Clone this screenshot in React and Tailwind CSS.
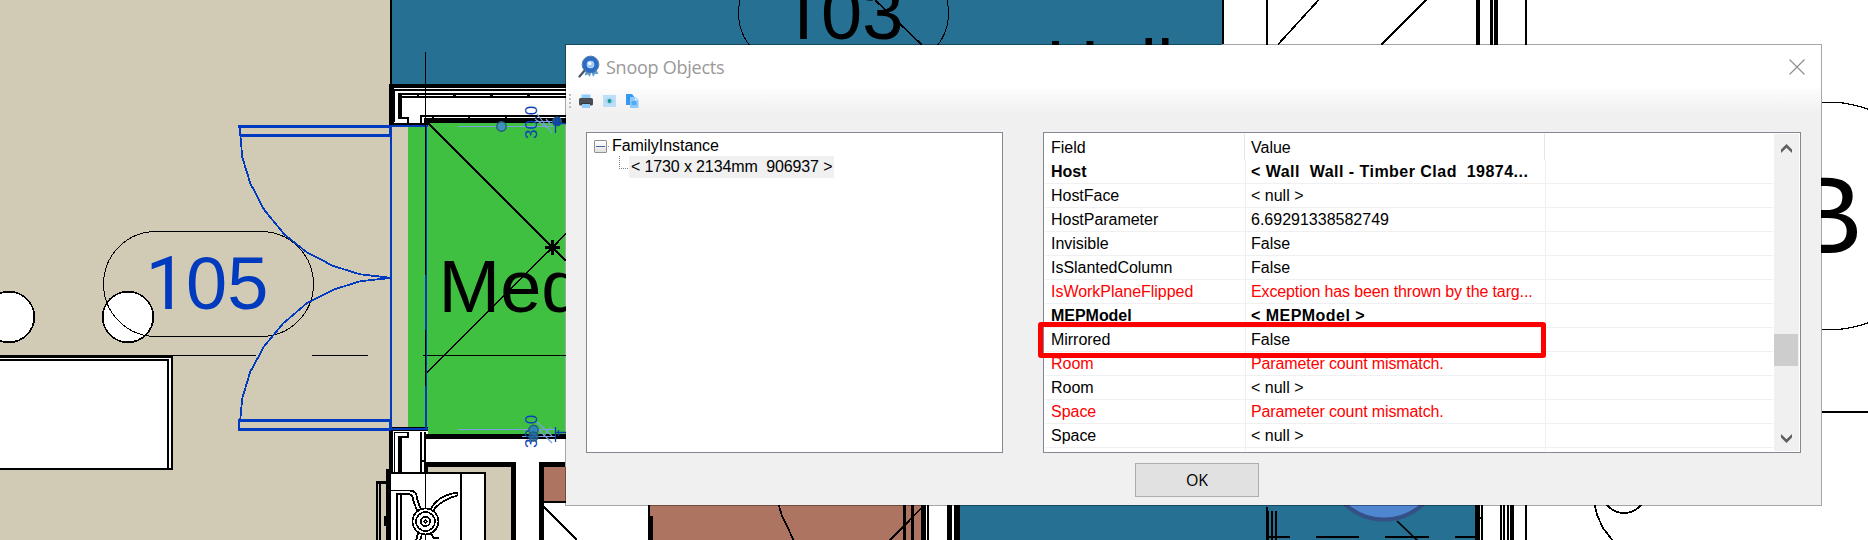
import React from "react";

const rows = [
  { field: "Host", value: "< Wall\u00a0 Wall - Timber Clad\u00a0 19874...", kind: "bold" },
  { field: "HostFace", value: "< null >" },
  { field: "HostParameter", value: "6.69291338582749" },
  { field: "Invisible", value: "False" },
  { field: "IsSlantedColumn", value: "False" },
  { field: "IsWorkPlaneFlipped", value: "Exception has been thrown by the targ...", kind: "error" },
  { field: "MEPModel", value: "< MEPModel >", kind: "bold" },
  { field: "Mirrored", value: "False" },
  { field: "Room", value: "Parameter count mismatch.", kind: "error" },
  { field: "Room", value: "< null >" },
  { field: "Space", value: "Parameter count mismatch.", kind: "error" },
  { field: "Space", value: "< null >" },
];

const tone = {
  bold: "font-bold text-black",
  error: "text-[#ff0000]",
};

const valueTracking = {
  bold: "tracking-[0.47px]",
  error: "tracking-[-0.12px]",
};

function Box({ x, y, w, h, c = "#000" }) {
  return <rect x={x} y={y} width={w} height={h} fill={c} />;
}

function Dimension({ y }) {
  return (
    <text
      transform={`translate(536.5 ${y}) rotate(-90)`}
      fontSize="17"
      fill="#0a40b8"
    >
      30.0
    </text>
  );
}

/* Room number: the leading 1 is set in Roboto, whose figure has no foot. */
function RoomNumber({ x, y, rest, color }) {
  return (
    <text x={x} y={y} fontSize="74" fill={color}>
      <tspan className="font-['Roboto',sans-serif]">1</tspan>
      <tspan x={x + 40.5}>{rest}</tspan>
    </text>
  );
}

function FloorPlan() {
  return (
    <svg
      className="absolute inset-0 font-['Liberation_Sans',Arial,sans-serif]"
      width="1868"
      height="540"
      viewBox="0 0 1868 540"
      fill="none"
      stroke="none"
    >
      <g shapeRendering="crispEdges">
        {/* room fills */}
        <Box x={0} y={0} w={391} h={540} c="#d1cab5" />
        <Box x={391} y={125} w={17} h={305} c="#d1cab5" />
        <Box x={392} y={0} w={830} h={84} c="#257093" />
        <Box x={390} y={0} w={2} h={84} />
        <Box x={1222} y={0} w={2} h={44} />

        {/* upper wall */}
        <Box x={390} y={84} w={176} h={39} c="#fff" />
        <Box x={389} y={84} w={177} h={4} />
        <Box x={389} y={84} w={5} h={41} />
        <Box x={394} y={89} w={172} h={2} />
        <Box x={394} y={89} w={1} h={33} />
        <Box x={398} y={93} w={168} h={2} />
        <Box x={398} y={96} w={168} h={2} />
        <Box x={417} y={93} w={2} h={4} />
        <Box x={453} y={93} w={3} h={4} />
        <Box x={490} y={93} w={3} h={4} />
        <Box x={527} y={93} w={3} h={4} />
        <Box x={398} y={93} w={4} h={25} />
        <Box x={398} y={117} w={11} h={2} />
        <Box x={407} y={117} w={2} h={6} />
        <Box x={420} y={115} w={146} h={2} />
        <Box x={420} y={115} w={2} h={8} />
        <Box x={424} y={118} w={142} h={5} />
        <Box x={432} y={116} w={2} h={3} />
        <Box x={468} y={116} w={2} h={3} />
        <Box x={505} y={116} w={2} h={3} />
        <Box x={390} y={123} w={38} h={2} />

        {/* lower wall */}
        <Box x={391} y={430} w={174} h={110} c="#fff" />
        <Box x={391} y={467} w={125} h={73} c="#d1cab5" />
        <Box x={391} y={430} w={34} h={44} c="#fff" />
        <Box x={408} y={125} w={157} h={303} c="#40c040" />
        <Box x={428} y={123} w={137} h={312} c="#40c040" />
        <Box x={389} y={427} w={39} h={4} />
        <Box x={389} y={427} w={4} h={46} />
        <Box x={394} y={432} w={14} h={1} />
        <Box x={394} y={432} w={1} h={41} />
        <Box x={407} y={432} w={2} h={6} />
        <Box x={398} y={436} w={11} h={2} />
        <Box x={398} y={436} w={4} h={37} />
        <Box x={420} y={432} w={2} h={41} />
        <Box x={424} y={432} w={2} h={41} />
        <Box x={421} y={460} w={4} h={2} />
        <Box x={426} y={434} w={140} h={5} />
        <Box x={425} y={462} w={91} h={5} />
        <Box x={424} y={462} w={4} h={10} />
        <Box x={511} y={462} w={5} h={78} />
        <Box x={539} y={462} w={26} h={5} />
        <Box x={539} y={462} w={5} h={78} />
        <Box x={544} y={467} w={22} h={34} c="#ad7561" />
        <Box x={544} y={501} w={22} h={2} />

        {/* sink unit */}
        <Box x={391} y={472} w={95} h={68} c="#fff" />
        <Box x={390} y={472} w={96} h={2} />
        <Box x={484} y={472} w={2} h={68} />
        <Box x={460} y={472} w={2} h={68} />
        <Box x={386} y={469} w={5} h={71} />
        <Box x={376} y={481} w={10} h={3} />
        <Box x={376} y={481} w={2} h={59} />
        <Box x={379} y={484} w={2} h={56} />
        <Box x={384} y={516} w={3} h={10} />
        <Box x={396} y={493} w={2} h={47} />
        <Box x={400} y={493} w={2} h={47} />
        <Box x={425} y={474} w={1} h={66} />

        {/* table */}
        <Box x={0} y={355} w={173} h={115} />
        <Box x={0} y={358} w={171} h={110} c="#fff" />
        <Box x={0} y={359} w={169} h={109} />
        <Box x={0} y={361} w={167} h={107} c="#fff" />
        <Box x={173} y={355} w={83} h={1} />
        <Box x={312} y={355} w={56} h={1} />

        {/* wall lines on the top right */}
        <Box x={1266} y={0} w={2} h={45} />
        <Box x={1476} y={0} w={4} h={45} />
        <Box x={1490} y={0} w={3} h={45} />
        <Box x={1494} y={0} w={4} h={45} />
        <Box x={1525} y={0} w={2} h={45} />

        {/* rooms along the bottom */}
        <Box x={650} y={505} w={272} h={35} c="#ad7561" />
        <Box x={648} y={505} w={2} h={35} />
        <Box x={648} y={516} w={5} h={24} />
        <Box x={903} y={505} w={3} h={35} />
        <Box x={911} y={505} w={3} h={35} />
        <Box x={921} y={505} w={5} h={35} />
        <Box x={927} y={505} w={2} h={35} />
        <Box x={947} y={505} w={5} h={35} />
        <Box x={954} y={505} w={6} h={35} />
        <Box x={960} y={505} w={515} h={35} c="#257093" />
        <Box x={1266} y={507} w={2} h={33} />
        <Box x={1268} y={511} w={1} h={29} />
        <Box x={1271} y={511} w={2} h={29} />
        <Box x={1275} y={511} w={2} h={29} />
        <Box x={1266} y={536} w={24} h={2} />
        <Box x={1316} y={536} w={43} h={2} />
        <Box x={1385} y={536} w={44} h={2} />
        <Box x={1455} y={536} w={20} h={2} />
        <Box x={1475} y={505} w={5} h={35} />
        <Box x={1481} y={505} w={2} h={35} />
        <Box x={1479} y={517} w={3} h={2} />
        <Box x={1500} y={505} w={2} h={35} />
        <Box x={1503} y={505} w={2} h={35} />
        <Box x={1507} y={505} w={2} h={35} />
        <Box x={1510} y={505} w={4} h={35} />
        <Box x={1525} y={505} w={2} h={35} />
        <Box x={1822} y={411} w={46} h={2} />
      </g>

      <g stroke="#000" strokeWidth="1.7" shapeRendering="crispEdges">
        <path d="M428 123 L566 261 M427 372.5 L566 233.5" strokeWidth="1.5" />
        <path d="M423 355.5 H566" strokeWidth="1" />
        <path d="M545 247.5 H560 M552.5 240 V255" strokeWidth="3" />
        <path d="M547 242 L558 253 M547 253 L558 242" strokeWidth="1.5" />
        <path d="M544 507 L577 540" />
        <path d="M875 0 L922 45" />
        <path d="M1278 44.5 L1319.5 -1 M1381 45 L1427 -1" />
        <path d="M921.7 508 L889 541" />
        <path d="M778.7 505 L782 516 L787 526 L794 541" />
        <path d="M1594.7 505 L1597 515 L1603 528 L1613 541" />
        <circle cx="1624" cy="491" r="22" />
        <circle cx="128" cy="317" r="25.3" fill="#fff" />
        <circle cx="9" cy="317" r="25.3" fill="#fff" />
      </g>

      {/* room tags */}
      <g stroke="#000" strokeWidth="1" shapeRendering="crispEdges">
        <rect x="103.5" y="231.5" width="210" height="105" rx="52.5" />
        <rect x="738.5" y="-39.5" width="210" height="105" rx="52.5" />
        <path d="M1822 102.5 H1838 Q1852 103.5 1869 109.5" strokeWidth="1.2" />
        <path d="M1822 329.5 H1838 Q1852 328.5 1869 322.5" strokeWidth="1.2" />
      </g>

      {/* faucet */}
      <g stroke="#000" strokeWidth="1.8" shapeRendering="crispEdges">
        <path d="M391 490.5 H410 Q417 491 417 499 L420.5 508.5 Q426 511 431 508.5 Q437 497 454 493 L457.5 492.5 V495.5 Q444 499 435 508 L433 511.5" />
        <path d="M397 494 H408 Q413 494 413.5 501 L417.5 512" />
        <circle cx="425.5" cy="521.5" r="13" fill="#fff" />
        <circle cx="425.5" cy="521.5" r="9.5" />
        <circle cx="425.5" cy="521.5" r="4.5" />
        <circle cx="425.5" cy="521.5" r="1.2" />
        <path d="M418 533 L416 541 M422 534 L420 541 M431 534 L434 538 H439" />
      </g>

      <circle cx="1384" cy="462.5" r="57" fill="#4e87d0" stroke="#355087" strokeWidth="4" />
      <path d="M1397 521 L1418 541" stroke="#000" strokeWidth="1.7" />

      {/* double door */}
      <g stroke="#003abe" strokeWidth="2" shapeRendering="crispEdges">
        <path d="M238 126.5 H391 M240 135.5 H391 M240 420.5 H391 M238 429.5 H391" strokeWidth="3" />
        <path d="M391 126 H428 M391 429 H428 M391 126 V430" />
        <path d="M239.5 126 L240.5 137 L242.3 157.3 L250.3 183.3 L264.3 210 L284.3 234.3 L306.7 252.3 L333.3 266 L360 274.3 L390 277.7" strokeWidth="1.8" />
        <path d="M390 278 L360 281.3 L333.3 289.7 L306.7 303.3 L283.3 323.3 L264.3 346 L250.3 371.7 L242.3 398.3 L240.3 419" strokeWidth="1.8" />
        <path d="M239 419 V431 M390 126 V136 M390 419 V430" strokeWidth="2.5" />
        <path d="M426.5 126 V429" strokeWidth="1" />
      </g>
      <g shapeRendering="crispEdges">
        <Box x={425} y={52} w={1} h={223} />
        <Box x={425} y={330} w={1} h={56} />
        <Box x={425} y={275} w={1} h={55} c="#003abe" />
        <Box x={425} y={386} w={1} h={42} c="#003abe" />
      </g>

      {/* tag texts */}
      <RoomNumber x={145.5} y={309} rest="05" color="#003abe" />
      <RoomNumber x={780.5} y={38.5} rest="03" color="#000" />
      <text x="438.5" y="312" fontSize="74" fill="#000">Med</text>
      <text x="1046" y="92" fontSize="74" fill="#000">Hall</text>
      <text x="1789.5" y="253" fontSize="110" fill="#000">B</text>

      {/* dimensions */}
      <g stroke="#7d9fe4" strokeWidth="1.2">
        <path d="M458 126.5 H553 M458 429.5 H556 M534 121.5 H556 M522 436.5 H556" />
        <path d="M537 114 L552 133 M535 119 L549 129 M546 119 L551 125 M537 422 L552 436 M539 430 L552 443 M543 437 L551 427" />
      </g>
      <Dimension y={139} />
      <Dimension y={448} />
      <g fill="#3f93b8" stroke="#245a80" strokeWidth="1.4">
        <circle cx="501.5" cy="126.5" r="4.7" />
        <circle cx="533.5" cy="430" r="4.7" fill="#2f86b0" />
        <circle cx="533.5" cy="436.5" r="4.5" fill="#2b6fa8" fillOpacity="0.7" />
        <circle cx="557" cy="121.5" r="4.3" fill="#1f4f90" />
      </g>
      <path d="M555.5 118 V133 M559 117 V126 M553 123.5 H566 M555.5 427 V442 M558.5 430 V436 M555.5 432.5 H566" stroke="#0a3fae" strokeWidth="1.3" />
    </svg>
  );
}

function SnoopIcon() {
  return (
    <svg width="22" height="24" viewBox="0 0 22 24" fill="none">
      <path d="M8.5 14 L6.5 20.5 L10 19.5 L12 22 L13.5 15 Z M13 15 L15 22 L17 19 L20.5 19 L17.5 13 Z" fill="#5c9fd6" />
      <path d="M7.5 14.5 L1.5 21.5" stroke="#4a5561" strokeWidth="2.2" strokeLinecap="round" />
      <circle cx="12.5" cy="9.5" r="6" fill="#cfe6fb" stroke="#2b6cc4" strokeWidth="4.4" />
      <circle cx="12.5" cy="9.5" r="8.4" stroke="#50709c" strokeWidth=".9" />
      <circle cx="12.5" cy="9.3" r="3.3" fill="#9cc8f5" />
      <circle cx="11.8" cy="8.5" r="1.7" fill="#f3faff" />
    </svg>
  );
}

function PrinterIcon() {
  return (
    <svg width="14" height="14" viewBox="0 0 14 14">
      <rect x="2.5" y="0.5" width="9" height="4" fill="#90cbfa" />
      <rect x="0" y="4" width="14" height="7.5" rx="1.5" fill="#4a4f55" />
      <rect x="2.5" y="9" width="9" height="2" fill="#343a40" />
      <rect x="3" y="10" width="8" height="4" fill="#90cbfa" />
    </svg>
  );
}

function EyeIcon() {
  return (
    <svg width="13" height="12" viewBox="0 0 13 12">
      <rect width="13" height="12" fill="#bbdefb" />
      <path d="M2.5 6 Q6.5 1.5 10.5 6 Q6.5 10.5 2.5 6 Z" fill="#d5edf7" stroke="#8fb9cc" strokeWidth=".8" />
      <circle cx="6.5" cy="6" r="2" fill="#0f9d9a" />
    </svg>
  );
}

function CopyIcon() {
  return (
    <svg width="13" height="14" viewBox="0 0 13 14">
      <path d="M0 0 H6 L8 2.5 V11 H0 Z" fill="#339af8" />
      <path d="M4 3 H9.5 L12.5 6 V14 H4 Z" fill="#8ecbfb" />
      <path d="M9 3.5 V6.5 H12 Z" fill="#d8efff" />
      <path d="M5.5 8 H10.5 M5.5 10 H10.5 M2 3.5 H3.5 M2 6 H3.5" stroke="#1e88e5" strokeWidth="1" />
    </svg>
  );
}

function Chevron({ up }) {
  return (
    <svg width="11" height="9" viewBox="0 0 11 9" fill="#606060">
      <path d={up ? "M5.5 0 L11 5.5 V9 L5.5 3.8 L0 9 V5.5 Z" : "M5.5 9 L11 3.5 V0 L5.5 5.2 L0 0 V3.5 Z"} />
    </svg>
  );
}

function Tree() {
  return (
    <div className="h-[321px] w-[417px] border border-[#828790] bg-white pt-1.5 pl-[7px]">
      <div className="flex h-[17px] items-start">
        <div className="mt-px flex size-[13px] items-center justify-center rounded-[1px] border border-[#919191] bg-gradient-to-b from-white to-[#e2e2e2]">
          <div className="h-px w-[9px] bg-[#4b63a7]" />
        </div>
        <div className="mt-[7px] ml-px h-px w-px bg-[#808080]" />
        <span className="-mt-px ml-[3px] whitespace-pre tracking-[-0.05px]">FamilyInstance</span>
      </div>
      <div className="flex h-[22px] pl-[25px]">
        <div className="h-[13px] w-[9px] border-b border-l border-dotted border-[#808080]" />
        <div className="ml-px flex h-[22px] w-[205px] items-center bg-[#f0f0f0] pl-[2px] tracking-[-0.13px] whitespace-pre">
          {"< 1730 x 2134mm  906937 >"}
        </div>
      </div>
    </div>
  );
}

function PropertyGrid() {
  return (
    <div className="relative flex h-[321px] w-[758px] border border-[#828790] bg-white p-px">
      <div className="flex w-[729px] flex-col overflow-hidden">
        <div className="flex h-[26px] items-center">
          <div className="flex h-full w-[200px] items-center border-r border-[#e5e5e5] pt-px pl-1.5">Field</div>
          <div className="flex h-full w-[300px] items-center border-r border-[#e5e5e5] pt-px pl-1.5">Value</div>
        </div>
        {rows.map((row, i) => (
          <div key={i} className={`flex h-6 w-[728px] shrink-0 border-b border-[#f0f0f0] leading-6 ${tone[row.kind] ?? "text-black"}`}>
            <div className="w-[201px] border-r border-[#f0f0f0] pl-1.5 tracking-[-0.03px]">{row.field}</div>
            <div className={`w-[300px] border-r border-[#f0f0f0] pl-[5px] whitespace-pre ${valueTracking[row.kind] ?? "tracking-normal"}`}>{row.value}</div>
          </div>
        ))}
        <div className="flex h-[3px]">
          <div className="w-[201px] border-r border-[#f0f0f0]" />
          <div className="w-[300px] border-r border-[#f0f0f0]" />
        </div>
      </div>
      <div className="flex w-[25px] flex-col items-center bg-[#f0f0f0] pt-2.5 pb-2">
        <Chevron up />
        <div className="mt-[181px] h-8 w-6 self-start bg-[#cdcdcd]" />
        <div className="mt-auto flex">
          <Chevron />
        </div>
      </div>
      <div className="absolute top-[189px] left-[-6px] h-9 w-[508px] rounded-[3px] border-[5px] border-[#ff0000]" />
    </div>
  );
}

function SnoopDialog() {
  return (
    <div className="absolute top-[44px] left-[565px] flex h-[462px] w-[1257px] flex-col border border-black/35 bg-[#f0f0f0] bg-clip-padding font-['Liberation_Sans',Arial,sans-serif] text-base leading-none text-black">
      <header className="flex h-11 shrink-0 items-center bg-white pr-4 pl-3">
        <SnoopIcon />
        <h1 className="ml-[6px] font-['Open_Sans',sans-serif] text-[18px] tracking-[-0.25px] text-[#999999]">Snoop Objects</h1>
        <svg className="ml-auto" width="16" height="16" viewBox="0 0 16 16">
          <path d="M.5 .5 L15.5 15.5 M15.5 .5 L.5 15.5" stroke="#8c8c8c" strokeWidth="1.1" />
        </svg>
      </header>
      <div className="flex h-6 shrink-0 items-center bg-gradient-to-b from-[#fcfcfc] to-[#f0f0f0] pl-[3px]">
        <div className="flex flex-col gap-[2px]">
          <i className="size-[2px] bg-[#bdbdbd]" />
          <i className="size-[2px] bg-[#bdbdbd]" />
          <i className="size-[2px] bg-[#bdbdbd]" />
          <i className="size-[2px] bg-[#bdbdbd]" />
        </div>
        <div className="ml-2 flex items-center gap-[10px]">
          <PrinterIcon />
          <EyeIcon />
          <CopyIcon />
        </div>
      </div>
      <main className="mt-[19px] flex gap-10 pl-5">
        <Tree />
        <PropertyGrid />
      </main>
      <button className="mt-2.5 ml-[569px] h-[34px] w-[124px] border border-[#adadad] bg-[#e1e1e1] font-['Open_Sans',sans-serif] text-base leading-none">
        OK
      </button>
    </div>
  );
}

export default function App() {
  return (
    <div className="relative h-[540px] w-[1868px] overflow-hidden bg-white">
      <FloorPlan />
      <SnoopDialog />
    </div>
  );
}
